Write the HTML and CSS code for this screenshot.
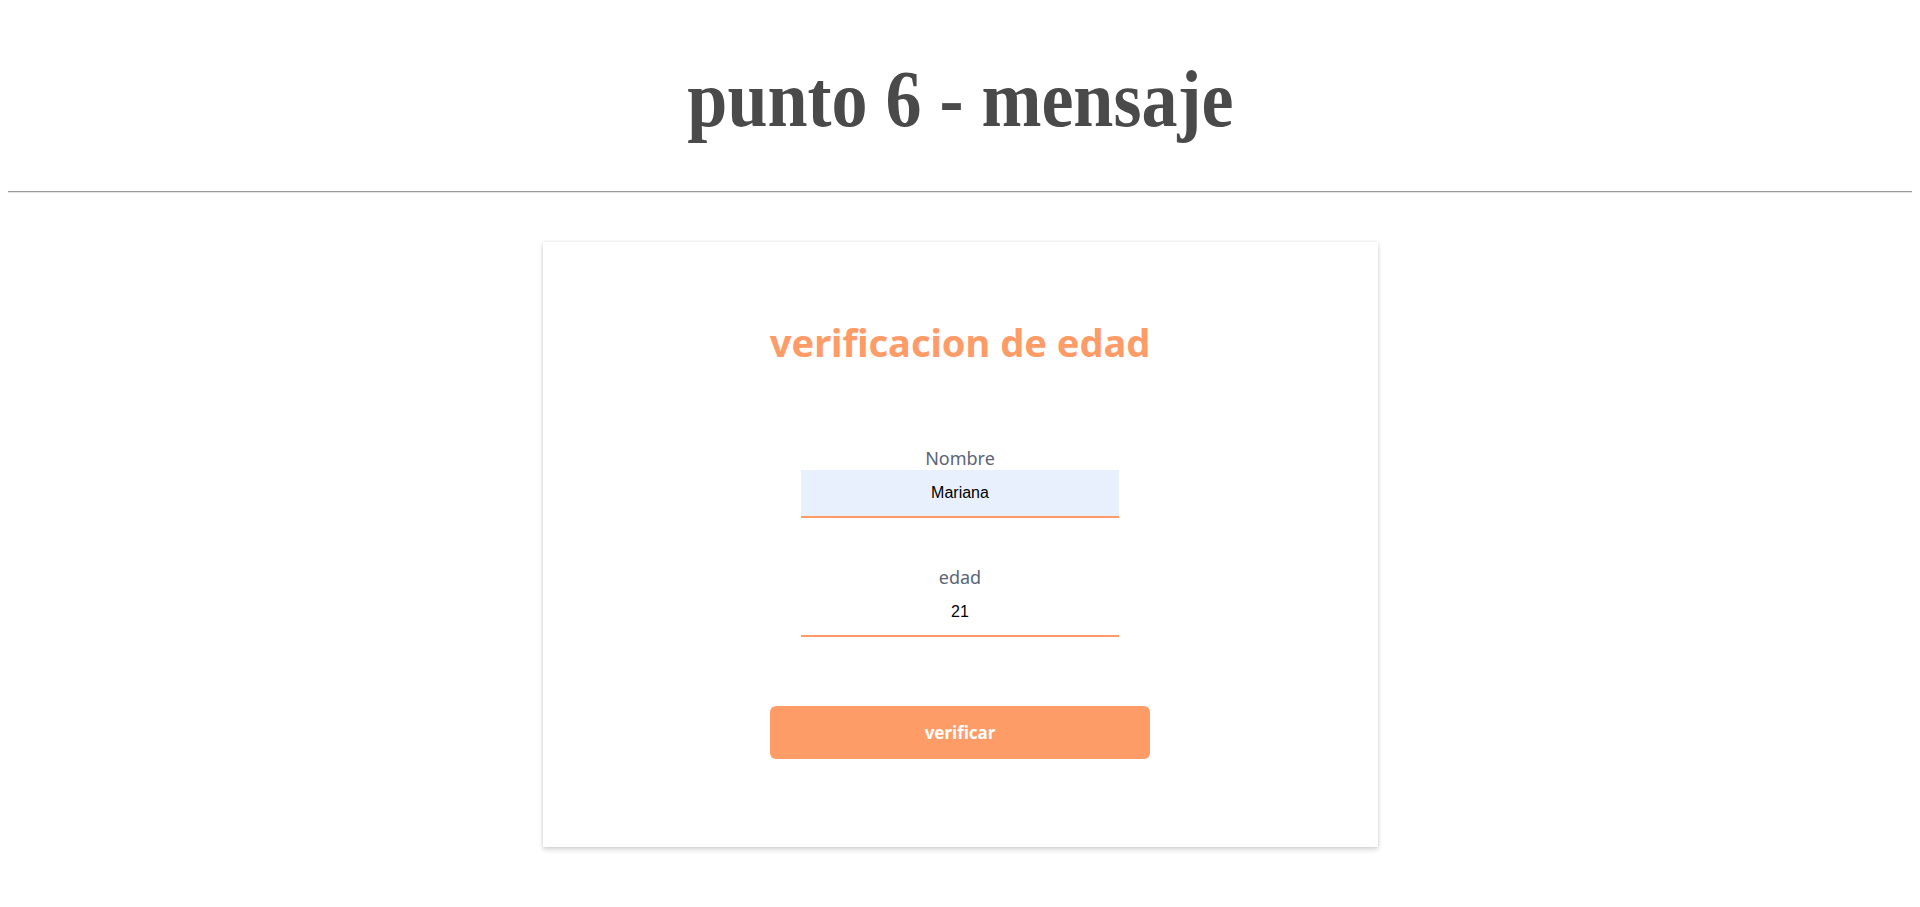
FILE: index.html
```html
<!DOCTYPE html>
<html lang="es">
<head>
<meta charset="utf-8">
<title>punto 6 - mensaje</title>
<link rel="stylesheet" href="styles.css">
</head>
<body>
<h1 class="page-title"><span class="page-title-text">punto 6 - mensaje</span></h1>
<hr class="divider">
<main class="card">
  <h2 class="card-title">verificacion de edad</h2>
  <form class="form">
    <label class="field-label" for="nombre">Nombre</label>
    <input class="field-input field-input--filled" id="nombre" type="text" value="Mariana">
    <label class="field-label field-label--spaced" for="edad">edad</label>
    <input class="field-input" id="edad" type="text" value="21">
    <button class="btn" type="button">verificar</button>
  </form>
</main>
</body>
</html>
```

FILE: styles.css
```css
html, body {
  background: #fff;
}
body {
  margin: 8px;
  padding-bottom: 40px;
}
.page-title {
  margin: 46px 0 0;
  text-align: center;
  font-family: "Liberation Serif", "Times New Roman", serif;
  font-weight: bold;
  font-size: 80px;
  line-height: 90px;
  color: #4a4a4a;
}
.page-title-text {
  display: inline-block;
  transform: scaleX(0.9);
}
.divider {
  margin: 47px 0 0;
  border: 0;
  border-top: 1px solid #9a9a9a;
  border-bottom: 1px solid #e6e6e6;
  height: 0;
}
.card {
  width: 835px;
  height: 605px;
  box-sizing: border-box;
  margin: 49px auto 0;
  background: #fff;
  box-shadow: 0 0 3px rgba(0, 0, 0, 0.12), 0 3px 5px rgba(0, 0, 0, 0.14);
  padding-top: 77px;
  display: flex;
  flex-direction: column;
  align-items: center;
  font-family: "Noto Sans", "Open Sans", sans-serif;
}
.card-title {
  margin: 0;
  font-size: 38px;
  line-height: 46px;
  font-weight: bold;
  color: #fe9b67;
}
.form {
  margin-top: 81px;
  display: flex;
  flex-direction: column;
  align-items: center;
}
.field-label {
  font-size: 18px;
  line-height: 24px;
  color: #5b6577;
}
.field-label--spaced {
  margin-top: 47px;
}
.field-input {
  width: 318px;
  height: 48px;
  box-sizing: border-box;
  border: 0;
  border-bottom: 2px solid #fe9b67;
  background: transparent;
  text-align: center;
  font-family: "Liberation Sans", Arial, sans-serif;
  font-size: 16px;
  color: #000;
  outline: none;
  padding: 0;
}
.field-input--filled {
  background: #e8f0fe;
}
.btn {
  margin-top: 69px;
  width: 380px;
  height: 53px;
  border: 0;
  border-radius: 6px;
  background: #fe9c68;
  color: #fff;
  font-family: "Noto Sans", "Open Sans", sans-serif;
  font-weight: bold;
  font-size: 17px;
  cursor: pointer;
}
```
